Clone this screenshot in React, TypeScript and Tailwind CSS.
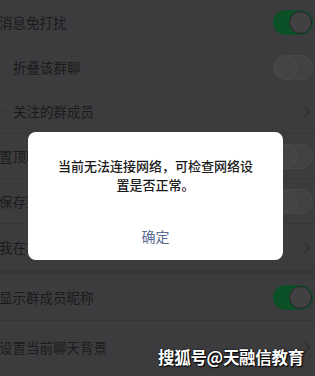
import React from 'react';

const font = { fontFamily: '"Noto Sans CJK SC", "Noto Sans", sans-serif' };

const Toggle: React.FC<{ on?: boolean }> = ({ on = false }) => {
    if (on) {
        return (
            <div className="w-[40px] h-[25px] rounded-full bg-[#0c5028] flex items-center justify-end pr-[1px]">
                <div className="w-[23px] h-[23px] rounded-full bg-[#414143] border border-[#262627]" />
            </div>
        );
    }
    return (
        <div className="w-[40px] h-[25px] rounded-full bg-[#424244] border border-[#48484a] flex items-center pl-[1px]">
            <div className="w-[22px] h-[22px] rounded-full bg-[#444446] border border-[#4c4c4e]" />
        </div>
    );
};

const Chevron = () => (
    <svg width="8" height="13" viewBox="0 0 8 13" className="mr-[2px]">
        <path d="M1.5 1.5 L6.5 6.5 L1.5 11.5" fill="none" stroke="#303032" strokeWidth="1.5" />
    </svg>
);

interface RowProps {
    label: string;
    indent?: boolean;
    right?: React.ReactNode;
    height: string;
    border?: boolean;
}

const Row: React.FC<RowProps> = ({ label, indent, right, height, border = true }) => (
    <div className={`relative flex items-center justify-between pr-[2px] ${height} ${border ? 'border-b border-[#363638]' : ''}`}>
        <div className="flex items-center">
            {indent && <div className="w-[5px] h-[1px] bg-[#343436] mr-[8px]" />}
            <span className={`text-[13.5px] text-[#1b1b1c] ${indent ? '' : '-ml-[1px]'}`}>{label}</span>
        </div>
        {right}
    </div>
);

export default function App() {
    return (
        <div className="relative w-[315px] h-[376px] overflow-hidden bg-[#3c3c3e]" style={font}>
            <div className="flex flex-col">
                <Row label="消息免打扰" height="h-[45px]" right={<Toggle on />} border={false} />
                <Row label="折叠该群聊" indent height="h-[45px]" right={<Toggle />} border={false} />
                <Row label="关注的群成员" indent height="h-[44px]" right={<Chevron />} />
                <Row label="置顶聊天" height="h-[45px]" right={<Toggle />} />
                <Row label="保存到通讯录" height="h-[45px]" right={<Toggle />} />
                <Row label="我在本群的昵称" height="h-[46px]" right={<Chevron />} border={false} />
                <div className="h-[4px] bg-[#373739]" />
                <Row label="显示群成员昵称" height="h-[47px]" right={<Toggle on />} />
                <Row label="设置当前聊天背景" height="h-[52px]" right={<Chevron />} border={false} />
            </div>

            {/* dialog */}
            <div className="absolute left-[28px] top-[132px] w-[255px] h-[128px] rounded-[8px] bg-white flex flex-col items-center">
                <p className="mt-[24px] px-[16px] text-center text-[13px] leading-[19px] font-medium text-[#1a1a1a]">
                    当前无法连接网络，可检查网络设<br />置是否正常。
                </p>
                <div className="mt-auto mb-[13px] text-[14px] text-[#5a6c92]">确定</div>
            </div>

            {/* watermark */}
            <div
                className="absolute left-[158px] top-[345px] text-[16.5px] font-bold text-white tracking-[-0.3px]"
                style={{ textShadow: '1px 1px 1px #000, 0 0 2px #000' }}
            >
                搜狐号@天融信教育
            </div>
        </div>
    );
}
